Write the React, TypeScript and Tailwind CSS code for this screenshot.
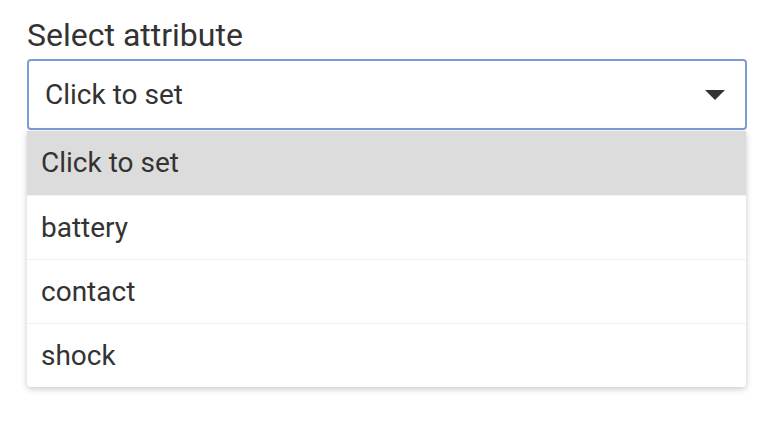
import React from 'react';

export default function App() {
  const options = ['Click to set', 'battery', 'contact', 'shock'];

  return (
    <div className="w-[768px] h-[432px] bg-white font-['Roboto',sans-serif] text-[#333]">
      <div className="pl-[27px] pr-[21px] pt-[13px]">
        <div className="text-[32px] leading-[44px] h-[46px]">Select attribute</div>

        {/* Select */}
        <div className="h-[71px] border-2 border-[#7f9bd6] rounded-[4px] flex items-center justify-between pl-[16px] pr-[20px]">
          <span className="text-[28px]">Click to set</span>
          <svg width="20" height="10" viewBox="0 0 20 10">
            <path d="M0 0 L20 0 L10 10 Z" fill="#333" />
          </svg>
        </div>

        {/* Options */}
        <div className="mt-[1px] mr-[1px] rounded-b-[4px] bg-white shadow-[0_2px_6px_rgba(0,0,0,0.22)] overflow-hidden">
          {options.map((opt, i) => (
            <div
              key={opt}
              className={`h-[64px] flex items-center pl-[14px] text-[28px] ${
                i === 0 ? 'bg-[#dcdcdc]' : 'border-t border-[#efefef]'
              }`}
            >
              {opt}
            </div>
          ))}
        </div>
      </div>
    </div>
  );
}
